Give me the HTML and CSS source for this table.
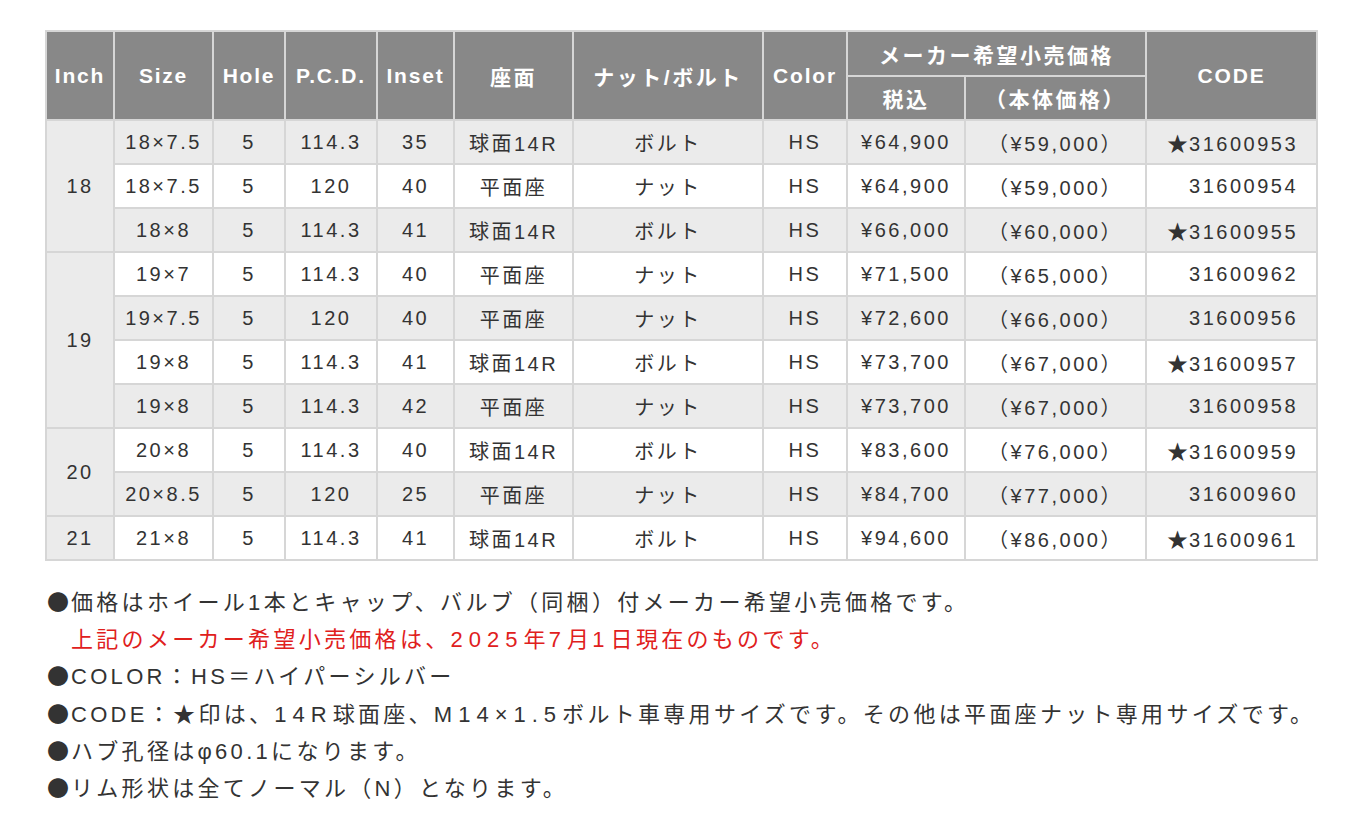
FILE: index.html
```html
<!DOCTYPE html>
<html lang="ja">
<head>
<meta charset="utf-8">
<title>Spec table</title>
<link rel="stylesheet" href="styles.css">
</head>
<body>
<div class="page">
<table class="spec">
<colgroup>
<col class="c-inch"><col class="c-size"><col class="c-hole"><col class="c-pcd"><col class="c-inset"><col class="c-seat"><col class="c-nut"><col class="c-color"><col class="c-tax"><col class="c-base"><col class="c-code">
</colgroup>
<thead>
<tr class="h1">
<th rowspan="2">Inch</th><th rowspan="2">Size</th><th rowspan="2">Hole</th><th rowspan="2">P.C.D.</th><th rowspan="2">Inset</th><th rowspan="2" class="jp">座面</th><th rowspan="2" class="jp">ナット/ボルト</th><th rowspan="2">Color</th><th colspan="2" class="jp">メーカー希望小売価格</th><th rowspan="2">CODE</th>
</tr>
<tr class="h2"><th class="jp">税込</th><th class="jp">（本体価格）</th></tr>
</thead>
<tbody>
<tr class="g"><td rowspan="3" class="inch">18</td><td>18×7.5</td><td>5</td><td>114.3</td><td>35</td><td>球面14R</td><td>ボルト</td><td>HS</td><td>¥64,900</td><td>（¥59,000）</td><td class="code"><span class="star">★</span>31600953</td></tr>
<tr class="w"><td>18×7.5</td><td>5</td><td>120</td><td>40</td><td>平面座</td><td>ナット</td><td>HS</td><td>¥64,900</td><td>（¥59,000）</td><td class="code">31600954</td></tr>
<tr class="g"><td>18×8</td><td>5</td><td>114.3</td><td>41</td><td>球面14R</td><td>ボルト</td><td>HS</td><td>¥66,000</td><td>（¥60,000）</td><td class="code"><span class="star">★</span>31600955</td></tr>
<tr class="w"><td rowspan="4" class="inch">19</td><td>19×7</td><td>5</td><td>114.3</td><td>40</td><td>平面座</td><td>ナット</td><td>HS</td><td>¥71,500</td><td>（¥65,000）</td><td class="code">31600962</td></tr>
<tr class="g"><td>19×7.5</td><td>5</td><td>120</td><td>40</td><td>平面座</td><td>ナット</td><td>HS</td><td>¥72,600</td><td>（¥66,000）</td><td class="code">31600956</td></tr>
<tr class="w"><td>19×8</td><td>5</td><td>114.3</td><td>41</td><td>球面14R</td><td>ボルト</td><td>HS</td><td>¥73,700</td><td>（¥67,000）</td><td class="code"><span class="star">★</span>31600957</td></tr>
<tr class="g"><td>19×8</td><td>5</td><td>114.3</td><td>42</td><td>平面座</td><td>ナット</td><td>HS</td><td>¥73,700</td><td>（¥67,000）</td><td class="code">31600958</td></tr>
<tr class="w"><td rowspan="2" class="inch">20</td><td>20×8</td><td>5</td><td>114.3</td><td>40</td><td>球面14R</td><td>ボルト</td><td>HS</td><td>¥83,600</td><td>（¥76,000）</td><td class="code"><span class="star">★</span>31600959</td></tr>
<tr class="g"><td>20×8.5</td><td>5</td><td>120</td><td>25</td><td>平面座</td><td>ナット</td><td>HS</td><td>¥84,700</td><td>（¥77,000）</td><td class="code">31600960</td></tr>
<tr class="w"><td class="inch">21</td><td>21×8</td><td>5</td><td>114.3</td><td>41</td><td>球面14R</td><td>ボルト</td><td>HS</td><td>¥94,600</td><td>（¥86,000）</td><td class="code"><span class="star">★</span>31600961</td></tr>
</tbody>
</table>
<ul class="notes">
<li><span class="b">●</span>価格はホイール1本とキャップ、バルブ（同梱）付メーカー希望小売価格です。</li>
<li class="red">上記のメーカー希望小売価格は、<span class="num">2025</span>年<span class="num">7</span>月<span class="num">1</span>日現在のものです。</li>
<li><span class="b">●</span>COLOR：HS＝ハイパーシルバー</li>
<li><span class="b">●</span>CODE：★印は、<span class="num">14R</span>球面座、<span class="num">M14×1.5</span>ボルト車専用サイズです。その他は平面座ナット専用サイズです。</li>
<li><span class="b">●</span>ハブ孔径はφ60.1になります。</li>
<li><span class="b">●</span>リム形状は全てノーマル（N）となります。</li>
</ul>
</div>
</body>
</html>
```
FILE: styles.css
```css
html, body {
  margin: 0;
  padding: 0;
  background: #ffffff;
}
.page {
  padding: 30px 0 0 45px;
  font-family: "Liberation Sans", "Noto Sans CJK JP", sans-serif;
  color: #333333;
}
.spec {
  border-collapse: collapse;
  table-layout: fixed;
  width: 1273px;
  border: 2px solid #d6d6d6;
}
.c-inch { width: 68px; }
.c-size { width: 99px; }
.c-hole { width: 72px; }
.c-pcd { width: 92px; }
.c-inset { width: 77px; }
.c-seat { width: 119px; }
.c-nut { width: 190px; }
.c-color { width: 84px; }
.c-tax { width: 118px; }
.c-base { width: 181px; }
.c-code { width: 171px; }
.spec th {
  background: #888888;
  color: #ffffff;
  font-weight: bold;
  font-size: 21px;
  letter-spacing: 1.8px;
  border: 2px solid #d6d6d6;
  padding: 0;
  text-align: center;
  white-space: nowrap;
}
.spec tr.h1 th { height: 43px; }
.spec tr.h2 th { height: 42px; }
.spec th.jp {
  letter-spacing: 2.5px;
}
.spec td {
  border: 2px solid #d6d6d6;
  height: 42px;
  padding: 0;
  text-align: center;
  font-size: 20px;
  letter-spacing: 2.5px;
  white-space: nowrap;
}
.spec tr.g td { background: #ebebeb; }
.spec tr.w td { background: #ffffff; }
.spec td.inch { background: #ebebeb !important; }
.spec td.code {
  text-align: right;
  padding-right: 18px;
}
.star {
  font-family: "Noto Sans CJK JP", sans-serif;
  font-size: 21px;
  letter-spacing: 1px;
}
.notes {
  list-style: none;
  margin: 23px 0 0 2px;
  padding: 0;
  font-family: "Liberation Sans", "Noto Sans CJK JP", sans-serif;
  font-size: 22px;
  line-height: 37.2px;
  letter-spacing: 3.3px;
  color: #333333;
}
.notes li {
  white-space: nowrap;
}
.notes .b {
  font-family: "Noto Sans CJK JP", sans-serif;
  letter-spacing: 2px;
  line-height: 0;
}
.notes .num {
  letter-spacing: 6px;
}
.notes .red {
  color: #e0201c;
  padding-left: 24px;
}
```
